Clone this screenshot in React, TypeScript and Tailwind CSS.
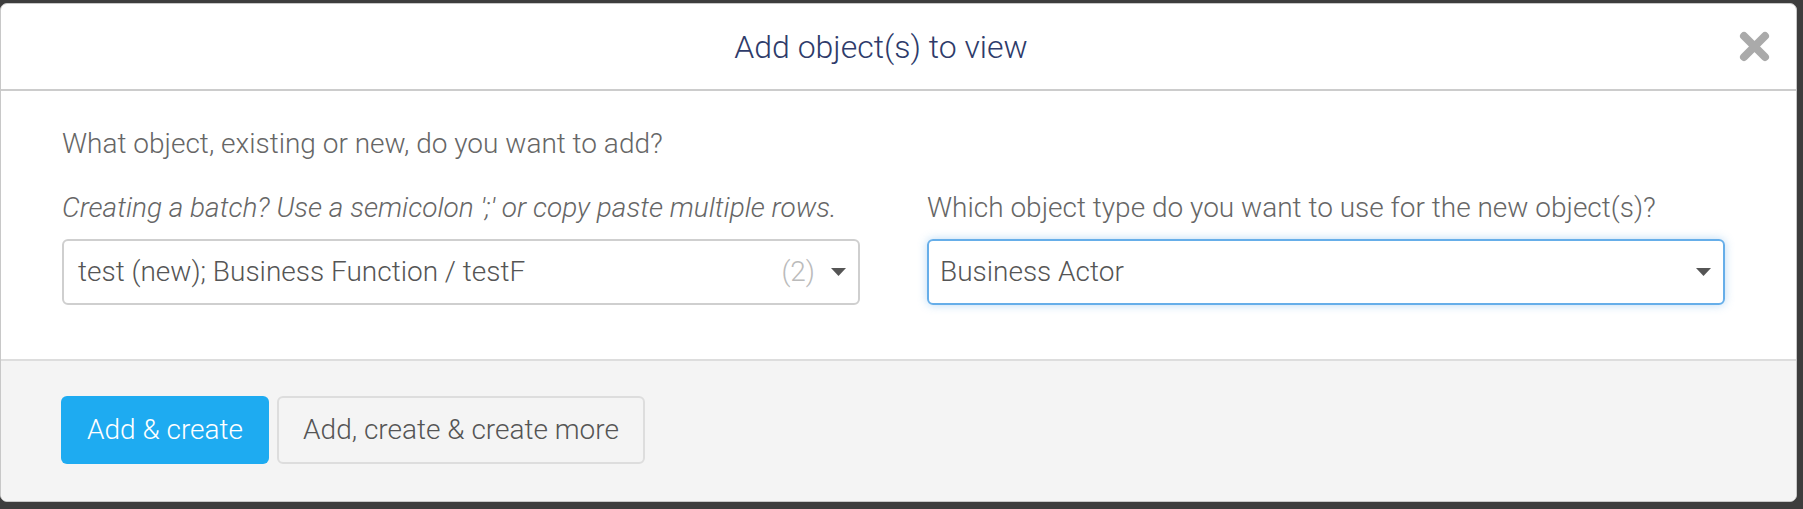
import React from 'react'

function CloseIcon() {
  return (
    <svg width="31" height="31" viewBox="0 0 31 31" aria-hidden="true">
      <path d="M5 5 L26 26 M26 5 L5 26" stroke="#aaaaaa" strokeWidth="8" strokeLinecap="round" />
    </svg>
  )
}

function Caret() {
  return (
    <svg width="15" height="8" viewBox="0 0 15 8" aria-hidden="true">
      <polygon points="0,0 15,0 7.5,8" fill="#555555" />
    </svg>
  )
}

export default function App() {
  return (
    <div className="h-[509px] w-[1803px] overflow-hidden bg-[#3d3d3d] pt-[3px] font-['Roboto','Liberation_Sans',sans-serif]">
      <div className="flex h-[499px] w-[1797px] flex-col overflow-hidden rounded-[7px] border border-[#c8c8c8] bg-white">
        {/* header */}
        <div className="flex h-[87px] shrink-0 items-center border-b-2 border-[#cccccc]">
          <h2 className="flex-1 pl-[22px] text-center text-[32px] font-light text-[#2e3b6a]">
            Add object(s) to view
          </h2>
          <button className="mr-[26px] flex h-[31px] w-[31px] items-center justify-center">
            <CloseIcon />
          </button>
        </div>

        {/* body */}
        <div className="shrink-0 px-[61px] pt-[37px] pb-[54px] font-light text-[#666666]">
          <p className="h-[32px] whitespace-nowrap text-[28px] leading-[32px]">
            What object, existing or new, do you want to add?
          </p>
          <div className="mt-[32px] grid grid-cols-[798px_798px] gap-x-[67px]">
            <div className="flex flex-col">
              <p className="h-[32px] whitespace-nowrap text-[28px] italic leading-[32px]">
                Creating a batch? Use a semicolon ';' or copy paste multiple rows.
              </p>
              <div className="mt-[15px] flex h-[66px] items-center rounded-[6px] border-2 border-[#cfcfcf] pr-[12px] pl-[14px]">
                <span className="flex-1 text-[28px] text-[#555555]">test (new); Business Function / testF</span>
                <span className="mr-[16px] text-[28px] text-[#bbbbbb]">(2)</span>
                <Caret />
              </div>
            </div>
            <div className="flex flex-col">
              <p className="h-[32px] whitespace-nowrap text-[28px] leading-[32px]">
                Which object type do you want to use for the new object(s)?
              </p>
              <div className="mt-[15px] flex h-[66px] items-center rounded-[6px] border-2 border-[#66aee9] pr-[12px] pl-[11px] shadow-[0_0_10px_rgba(102,174,233,0.45)]">
                <span className="flex-1 text-[28px] text-[#555555]">Business Actor</span>
                <Caret />
              </div>
            </div>
          </div>
        </div>

        {/* footer */}
        <div className="flex flex-1 items-start gap-[8px] border-t-2 border-[#dddddd] bg-[#f4f4f4] px-[60px] pt-[35px]">
          <button className="h-[68px] rounded-[6px] bg-[#1eabf1] px-[26px] text-[28px] font-light text-white">
            Add &amp; create
          </button>
          <button className="h-[68px] rounded-[6px] border-2 border-[#dddddd] bg-[#f4f4f4] px-[24px] text-[28px] font-light text-[#555555]">
            Add, create &amp; create more
          </button>
        </div>
      </div>
    </div>
  )
}
